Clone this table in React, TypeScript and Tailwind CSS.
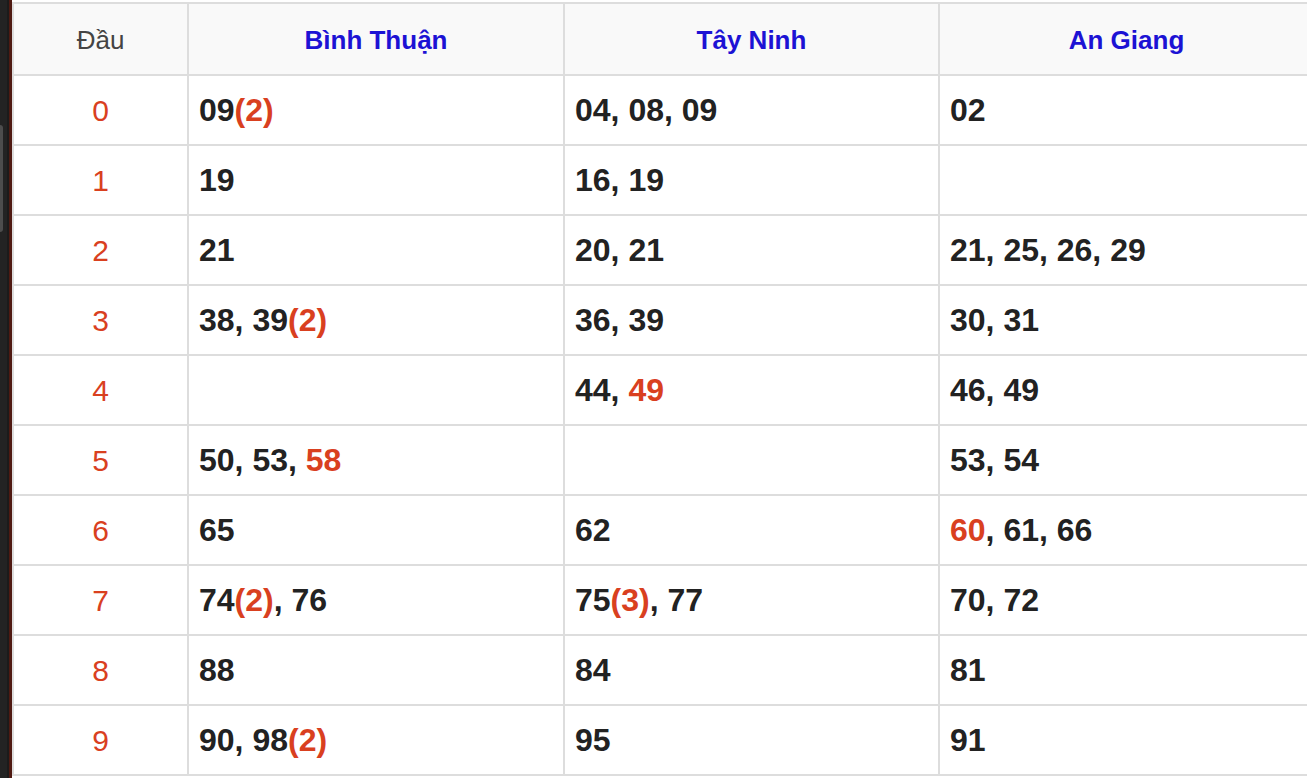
import React from "react";

type Tok = { n: string; c?: number; red?: boolean };

const rows: { d: string; cols: Tok[][] }[] = [
  { d: "0", cols: [[{ n: "09", c: 2 }], [{ n: "04" }, { n: "08" }, { n: "09" }], [{ n: "02" }]] },
  { d: "1", cols: [[{ n: "19" }], [{ n: "16" }, { n: "19" }], []] },
  { d: "2", cols: [[{ n: "21" }], [{ n: "20" }, { n: "21" }], [{ n: "21" }, { n: "25" }, { n: "26" }, { n: "29" }]] },
  { d: "3", cols: [[{ n: "38" }, { n: "39", c: 2 }], [{ n: "36" }, { n: "39" }], [{ n: "30" }, { n: "31" }]] },
  { d: "4", cols: [[], [{ n: "44" }, { n: "49", red: true }], [{ n: "46" }, { n: "49" }]] },
  { d: "5", cols: [[{ n: "50" }, { n: "53" }, { n: "58", red: true }], [], [{ n: "53" }, { n: "54" }]] },
  { d: "6", cols: [[{ n: "65" }], [{ n: "62" }], [{ n: "60", red: true }, { n: "61" }, { n: "66" }]] },
  { d: "7", cols: [[{ n: "74", c: 2 }, { n: "76" }], [{ n: "75", c: 3 }, { n: "77" }], [{ n: "70" }, { n: "72" }]] },
  { d: "8", cols: [[{ n: "88" }], [{ n: "84" }], [{ n: "81" }]] },
  { d: "9", cols: [[{ n: "90" }, { n: "98", c: 2 }], [{ n: "95" }], [{ n: "91" }]] },
];

const heads = ["Bình Thuận", "Tây Ninh", "An Giang"];

function Cell({ toks }: { toks: Tok[] }) {
  return (
    <div className="bg-white flex items-center pl-[10px] text-[32px] font-bold text-[#222222] whitespace-pre">
      <span>
        {toks.map((t, i) => (
          <React.Fragment key={i}>
            {i > 0 && ", "}
            <span className={t.red ? "text-[#d9401f]" : ""}>{t.n}</span>
            {t.c ? <span className="text-[#d9401f]">({t.c})</span> : null}
          </React.Fragment>
        ))}
      </span>
    </div>
  );
}

export default function App() {
  return (
    <div
      className="flex h-[778px] w-[1307px] overflow-hidden bg-white"
      style={{ fontFamily: '"Liberation Sans", Arial, sans-serif' }}
    >
      <div className="flex h-full w-[12px] shrink-0">
        <div className="w-[7px] bg-[#232323]">
          <div className="mt-[125px] h-[107px] w-[3px] rounded-r-[3px] bg-[#4d4d4d]" />
        </div>
        <div className="w-[2px] bg-[#1b1b1b]" />
        <div className="w-[3px] bg-[#4f1a12]" />
      </div>
      <div className="shrink-0">
        <div className="mt-[2px] grid grid-cols-[173px_374px_373px_373px] grid-rows-[70px_repeat(10,68px)] gap-[2px] p-[2px] bg-[#dddddd]">
          <div className="bg-[#f9f9f9] flex items-center justify-center pt-[3px] text-[26px] text-[#444444]">Đầu</div>
          {heads.map((h) => (
            <div key={h} className="bg-[#f9f9f9] flex items-center justify-center pt-[3px] text-[26px] font-bold text-[#1c12d4]">
              {h}
            </div>
          ))}
          {rows.map((r) => (
            <React.Fragment key={r.d}>
              <div className="bg-white flex items-center justify-center text-[30px] text-[#d9401f]">{r.d}</div>
              {r.cols.map((c, i) => (
                <Cell key={i} toks={c} />
              ))}
            </React.Fragment>
          ))}
        </div>
      </div>
    </div>
  );
}
